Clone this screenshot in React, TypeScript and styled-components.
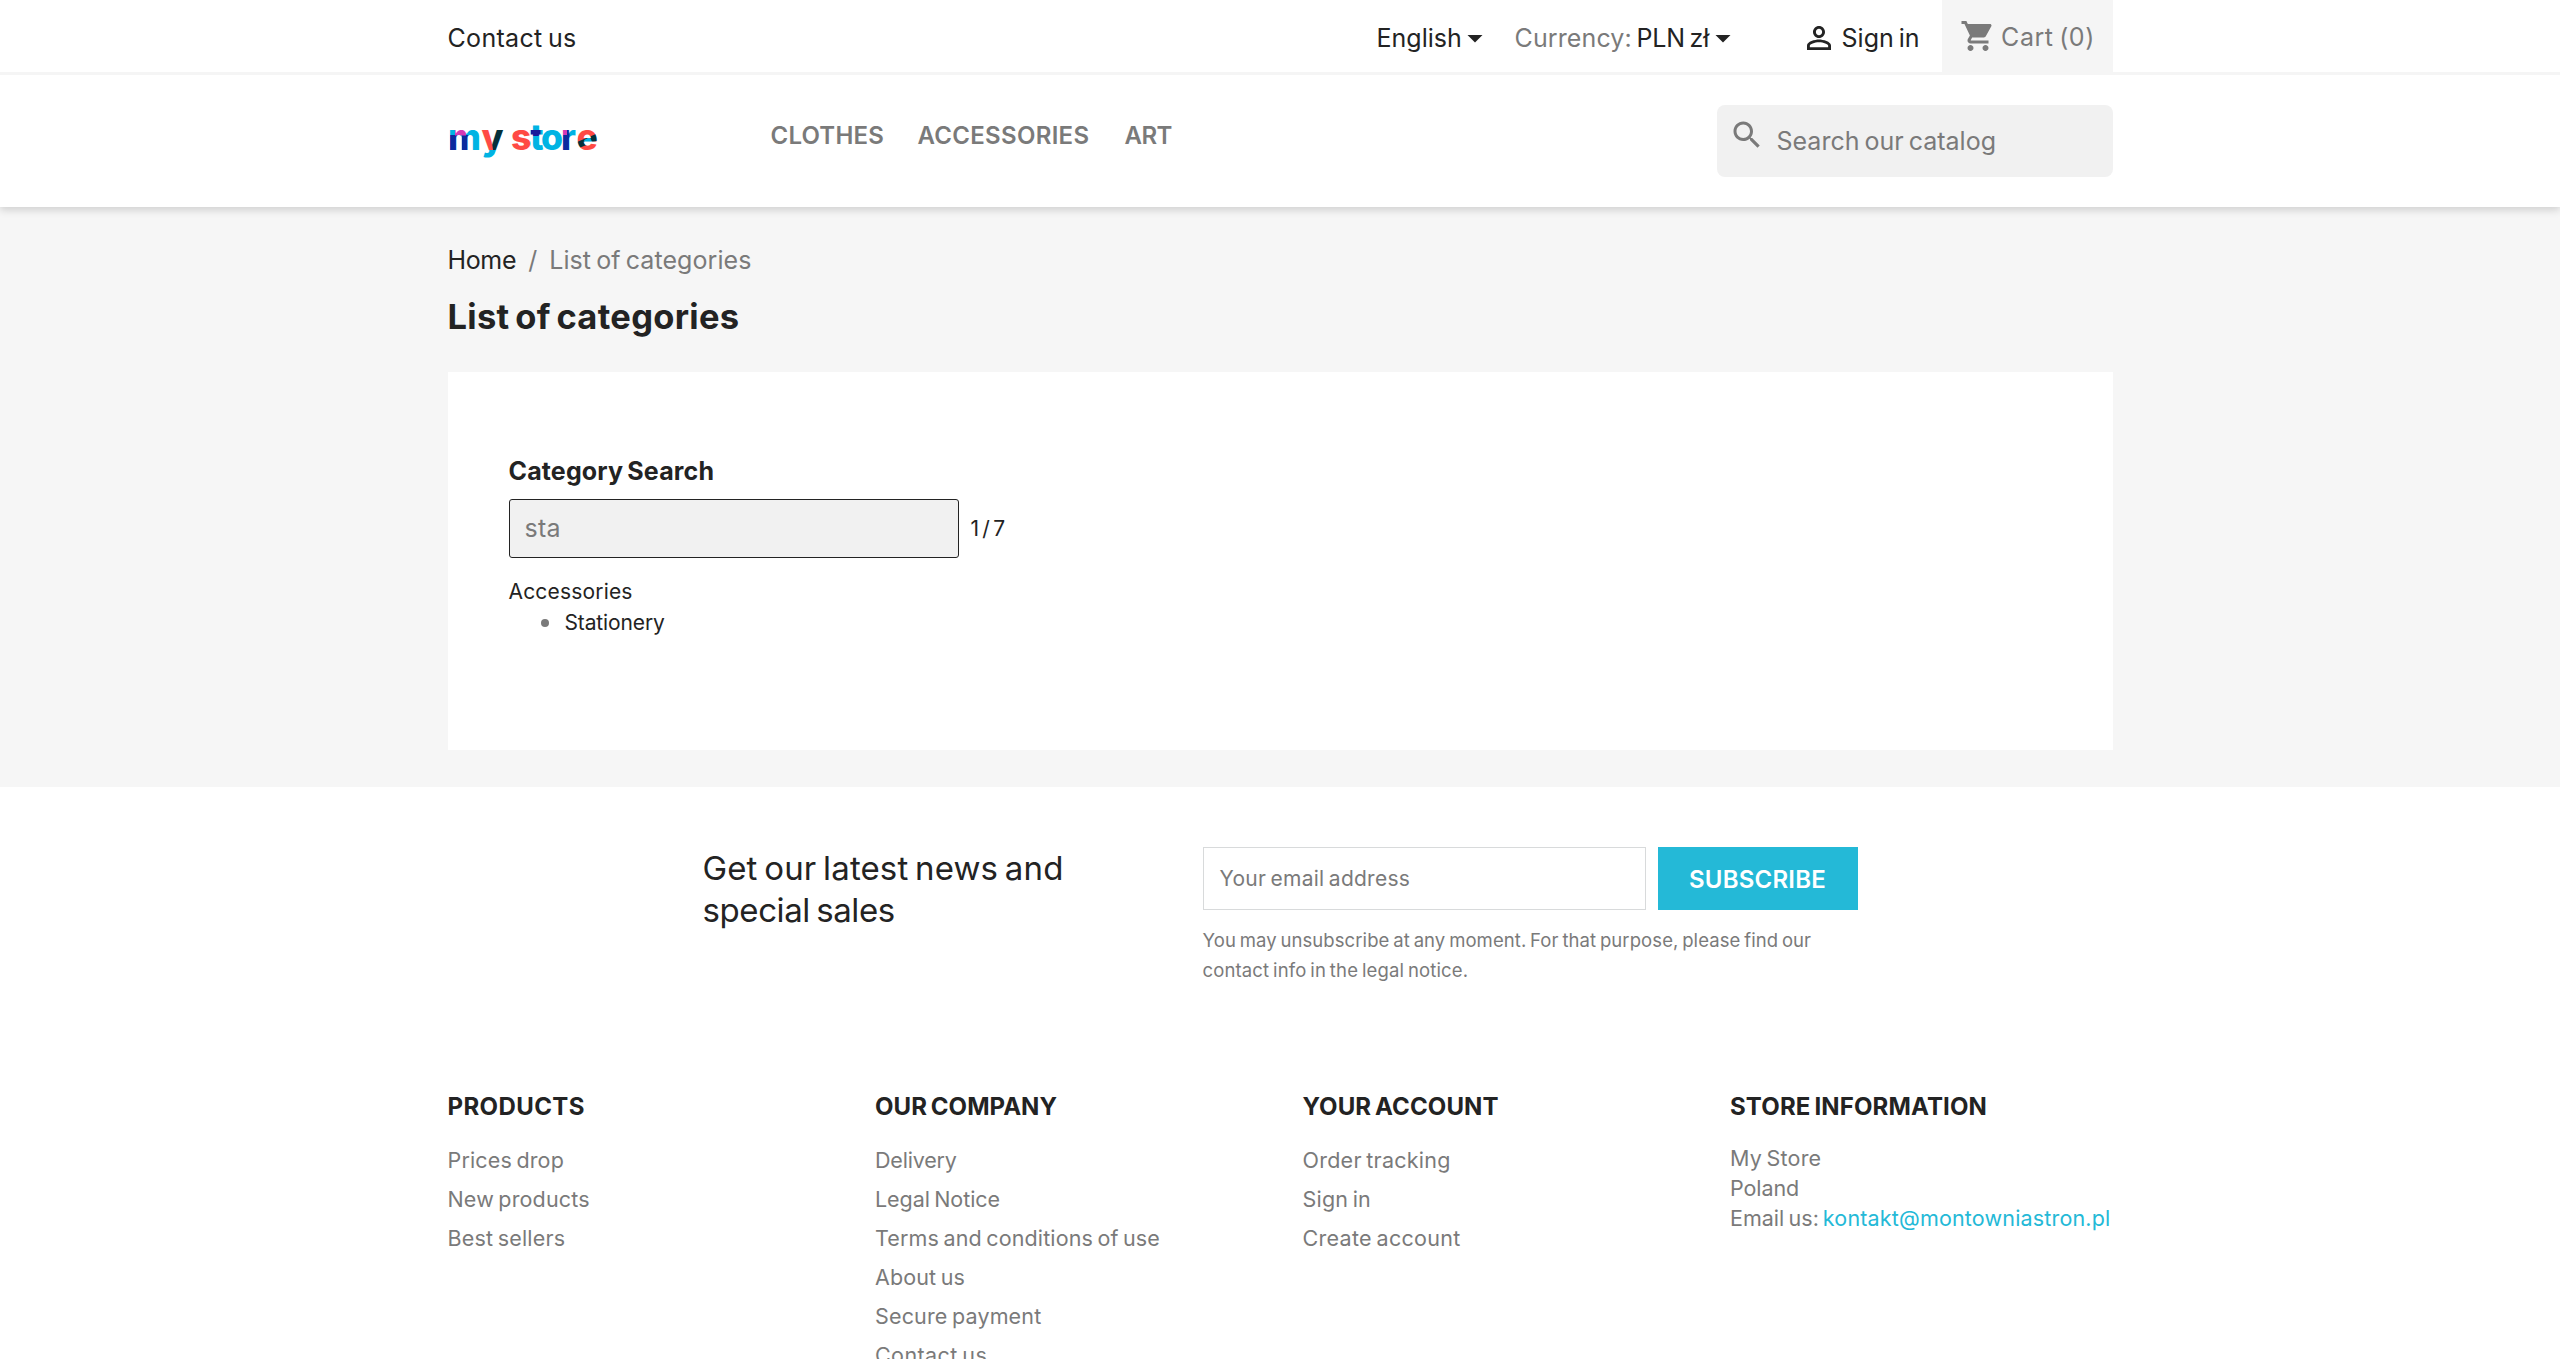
import React from 'react';
import styled, { createGlobalStyle } from 'styled-components';

const dark = '#232323';
const gray = '#7a7a7a';
const cyan = '#24b9d7';

const GlobalStyle = createGlobalStyle`
  * { box-sizing: border-box; }
  html, body { height: 100%; margin: 0; overflow: hidden; background: #fff; }
  body { font-family: Inter, 'Liberation Sans', sans-serif; font-size: 21px; color: ${dark}; }
  ul { list-style: none; margin: 0; padding: 0; }
  h1, h2, h3, p { margin: 0; }
  a { text-decoration: none; color: inherit; }
`;

type TextProps = { $size?: number; $weight?: number; $ls?: number; $color?: string; $lh?: number };

const Text = styled.span<TextProps>`
  font-size: ${p => p.$size ?? 21}px;
  font-weight: ${p => p.$weight ?? 400};
  letter-spacing: ${p => p.$ls ?? 0}px;
  word-spacing: -0.08em;
  color: ${p => p.$color ?? dark};
  line-height: ${p => p.$lh ?? 30}px;
  white-space: nowrap;
`;

const Container = styled.div`
  width: 1665px;
  margin: 0 auto;
`;

const Page = styled.div`
  height: 1359px;
  overflow: hidden;
`;

const Header = styled.header`
  position: relative;
  background: #fff;
  box-shadow: 0 3px 8px rgba(0, 0, 0, 0.16);
`;

const TopBar = styled.nav`
  height: 75px;
  border-bottom: 3px solid #f5f5f5;
`;

const TopBarRow = styled(Container)`
  display: flex;
  justify-content: space-between;
`;

const ContactLink = styled.a`
  display: flex;
  padding-top: 23px;
`;

const TopRight = styled.div`
  display: flex;
  height: 75px;
`;

const TopItem = styled.div<{ $width: number }>`
  width: ${p => p.$width}px;
  display: flex;
  align-items: flex-start;
  padding-top: 23px;
`;

const IconSvg = styled.svg<{ $color?: string; $margin?: string }>`
  width: 36px;
  height: 36px;
  flex: none;
  fill: ${p => p.$color ?? dark};
  margin: ${p => p.$margin ?? '0'};
`;

const Cart = styled.div`
  width: 171px;
  height: 75px;
  background: #f5f5f5;
  display: flex;
  padding: 18px 0 0 18px;
`;

const HeaderMain = styled(Container)`
  height: 132px;
  display: flex;
`;

const LogoLink = styled.a`
  width: 323px;
  padding-top: 38px;
`;

const Menu = styled.ul`
  display: flex;
  flex: 1;
  padding-top: 46px;
`;

const MenuItem = styled.li<{ $width?: number }>`
  width: ${p => (p.$width ? `${p.$width}px` : 'auto')};
`;

const SearchBox = styled.div`
  width: 396px;
  height: 72px;
  margin-top: 30px;
  border-radius: 8px;
  background: #f1f1f1;
  display: flex;
  padding: 11px 0 0 12px;
`;

const SearchPlaceholder = styled.div`
  display: flex;
  padding: 10px 0 0 12px;
`;

const Main = styled.main`
  height: 580px;
  background: #f6f6f6;
  padding-top: 38px;
`;

const Breadcrumb = styled.nav`
  display: flex;
  height: 30px;
  gap: 12px;
`;

const Title = styled.h1`
  display: flex;
  padding-top: 19px;
  height: 97px;
`;

const Panel = styled.section`
  height: 378px;
  background: #fff;
  padding: 84px 61px 0;
`;

const SectionTitle = styled.h2`
  display: flex;
  height: 30px;
`;

const SearchRow = styled.div`
  display: flex;
  align-items: center;
  gap: 12px;
  margin: 13px 0 19px;
`;

const CategoryInput = styled.div`
  width: 450px;
  height: 59px;
  border: 1.5px solid ${dark};
  border-radius: 3px;
  background: #f1f1f1;
  padding: 13px 15px 0;
  display: flex;
`;

const Tree = styled.div`
  display: flex;
  flex-direction: column;
`;

const TreeChild = styled.div`
  display: flex;
  align-items: center;
  padding-left: 32px;
  height: 31px;
`;

const Bullet = styled.span`
  width: 8px;
  height: 8px;
  margin-right: 16px;
  border-radius: 50%;
  background: ${gray};
`;

const Newsletter = styled(Container)`
  height: 290px;
  padding: 60px 0 0 255px;
  display: flex;
`;

const NewsTitle = styled.p`
  width: 500px;
  display: flex;
  flex-direction: column;
`;

const NewsForm = styled.div`
  display: flex;
  flex-direction: column;
`;

const FormRow = styled.div`
  display: flex;
  gap: 12px;
  margin-bottom: 15px;
`;

const EmailInput = styled.div`
  width: 443px;
  height: 63px;
  border: 1.5px solid #d8dadb;
  padding: 16px 16px 0;
  display: flex;
`;

const SubscribeButton = styled.button`
  width: 200px;
  height: 63px;
  border: 0;
  padding: 2px 0 0;
  background: ${cyan};
  font-family: inherit;
`;

const FooterGrid = styled(Container)`
  display: grid;
  grid-template-columns: 427.5px 427.5px 427.5px 1fr;
`;

const FooterTitle = styled.h3`
  height: 53px;
  padding-top: 15px;
  display: flex;
`;

const LinkList = styled.ul`
  padding-top: 15px;
`;

const LinkItem = styled.li`
  height: 39px;
  display: flex;
`;

const StoreInfo = styled.div`
  padding-top: 13px;
  display: flex;
  flex-direction: column;
`;

const InfoLine = styled.div`
  display: flex;
  gap: 4px;
`;

const CaretIcon = ({ margin }: { margin: string }) => (
  <IconSvg viewBox="0 0 24 24" $margin={margin}><path d="M7 10l5 5 5-5z" /></IconSvg>
);

const PersonIcon = () => (
  <IconSvg viewBox="0 0 24 24" $margin="-3px 0 0 -5px">
    <path d="M12 5.9c1.16 0 2.1.94 2.1 2.1s-.94 2.1-2.1 2.1S9.9 9.16 9.9 8s.94-2.1 2.1-2.1m0 9c2.97 0 6.1 1.46 6.1 2.1v1.1H5.9V17c0-.64 3.13-2.1 6.1-2.1M12 4C9.79 4 8 5.79 8 8s1.79 4 4 4 4-1.79 4-4-1.79-4-4-4zm0 9c-2.67 0-8 1.34-8 4v3h16v-3c0-2.66-5.33-4-8-4z" />
  </IconSvg>
);

const CartIcon = () => (
  <IconSvg viewBox="0 0 24 24" $color={gray}>
    <path d="M7 18c-1.1 0-1.99.9-1.99 2S5.9 22 7 22s2-.9 2-2-.9-2-2-2zM1 2v2h2l3.6 7.59-1.35 2.45c-.16.28-.25.61-.25.96 0 1.1.9 2 2 2h12v-2H7.42c-.14 0-.25-.11-.25-.25l.03-.12.9-1.63h7.45c.75 0 1.41-.41 1.75-1.03l3.58-6.49c.08-.14.12-.31.12-.48 0-.55-.45-1-1-1H5.21l-.94-2H1zm16 16c-1.1 0-1.99.9-1.99 2s.89 2 1.99 2 2-.9 2-2-.9-2-2-2z" />
  </IconSvg>
);

const SearchIcon = () => (
  <IconSvg viewBox="0 0 24 24" $color={gray} $margin="1px 0 0">
    <path d="M15.5 14h-.79l-.28-.27C15.41 12.59 16 11.11 16 9.5 16 5.91 13.09 3 9.5 3S3 5.91 3 9.5 5.91 16 9.5 16c1.61 0 3.09-.59 4.23-1.57l.27.28v.79l5 4.99L20.49 19l-4.99-5zm-6 0C7.01 14 5 11.99 5 9.5S7.01 5 9.5 5 14 7.01 14 9.5 11.99 14 9.5 14z" />
  </IconSvg>
);

/* The wordmark is one text filled with a pattern of colour patches. */
const Logo = () => (
  <svg width="152" height="54" viewBox="0 0 152 54">
    <defs>
      <pattern id="ink" patternUnits="userSpaceOnUse" x="0" y="0" width="152" height="54">
        <rect width="152" height="54" fill="#00b3e3" />
        <rect x="2" y="22" width="7" height="18" fill="#0b2b9e" />
        <rect x="14" y="22" width="6.5" height="18" fill="#0b2b9e" />
        <rect x="7" y="16" width="11" height="6.5" fill="#d53ab4" />
        <path d="M33 16h12v11l3 10h-15z" fill="#ff4a44" />
        <path d="M46 16h10l-6 21h-5l-1-8z" fill="#06303a" />
        <rect x="63" y="16" width="19" height="24" fill="#ff4a44" />
        <rect x="83" y="17" width="9.5" height="6" fill="#1a1a9a" />
        <rect x="114" y="16" width="7.5" height="24" fill="#0b2b9e" />
        <rect x="114" y="16" width="5" height="6" fill="#d53ab4" />
        <rect x="129.5" y="16" width="22" height="24" fill="#ff4a44" />
        <path d="M129 29l19-8 3 6-20 8z" fill="#06303a" />
        <path d="M136 27l6-3 2 5-6 3z" fill="#00b3e3" />
      </pattern>
    </defs>
    <text y="37.3" fill="url(#ink)" fontFamily="Inter, sans-serif" fontWeight="800" fontSize="35.5">
      <tspan x="0 33.5">my</tspan>
      <tspan x="63 82 93 113 128.5">store</tspan>
    </text>
  </svg>
);

type LinkDef = [string, number];

const columns: { title: LinkDef; links: LinkDef[] }[] = [
  { title: ['PRODUCTS', 0.39], links: [['Prices drop', 0.15], ['New products', 0.15], ['Best sellers', 0.18]] },
  {
    title: ['OUR COMPANY', 0.05],
    links: [['Delivery', -0.2], ['Legal Notice', -0.05], ['Terms and conditions of use', 0.13], ['About us', 0.12], ['Secure payment', 0.15], ['Contact us', 0.4]],
  },
  { title: ['YOUR ACCOUNT', 0.1], links: [['Order tracking', 0.25], ['Sign in', 0.2], ['Create account', 0.3]] },
];

export default function App() {
  return (
    <Page>
      <GlobalStyle />
      <Header>
        <TopBar>
          <TopBarRow>
            <ContactLink href="#"><Text $size={25} $ls={0.32}>Contact us</Text></ContactLink>
            <TopRight>
              <TopItem $width={138}>
                <Text $size={25} $ls={0}>English</Text>
                <CaretIcon margin="-3px 0 0 -5px" />
              </TopItem>
              <TopItem $width={291}>
                <Text $size={25} $ls={0.12} $color={gray}>Currency:</Text>
                <Text $size={25} $ls={-0.25}>&nbsp;PLN zł</Text>
                <CaretIcon margin="-3px 0 0 -4px" />
              </TopItem>
              <TopItem $width={136}>
                <PersonIcon />
                <Text $size={25} $ls={0}>&nbsp;Sign in</Text>
              </TopItem>
              <Cart>
                <CartIcon />
                <Text $size={25} $ls={0.55} $color={gray} $lh={38}>&nbsp;Cart (0)</Text>
              </Cart>
            </TopRight>
          </TopBarRow>
        </TopBar>
        <HeaderMain>
          <LogoLink href="#"><Logo /></LogoLink>
          <Menu>
            <MenuItem $width={147}><Text $size={24} $weight={600} $ls={0.2} $color={gray}>CLOTHES</Text></MenuItem>
            <MenuItem $width={207}><Text $size={24} $weight={600} $ls={0.3} $color={gray}>ACCESSORIES</Text></MenuItem>
            <MenuItem><Text $size={24} $weight={600} $ls={-0.5} $color={gray}>ART</Text></MenuItem>
          </Menu>
          <SearchBox>
            <SearchIcon />
            <SearchPlaceholder><Text $size={25} $ls={0} $color={gray}>Search our catalog</Text></SearchPlaceholder>
          </SearchBox>
        </HeaderMain>
      </Header>

      <Main>
        <Container>
          <Breadcrumb>
            <Text $size={25} $ls={-0.35}>Home</Text>
            <Text $size={25} $color={gray}>/</Text>
            <Text $size={25} $ls={0.08} $color={gray}>List of categories</Text>
          </Breadcrumb>
          <Title><Text $size={34.5} $weight={700} $ls={0.3} $lh={46}>List of categories</Text></Title>
          <Panel>
            <SectionTitle><Text $size={25} $weight={700} $ls={0.15}>Category Search</Text></SectionTitle>
            <SearchRow>
              <CategoryInput><Text $size={25} $ls={0.3} $color={gray}>sta</Text></CategoryInput>
              <Text $ls={-0.47}>1 / 7</Text>
            </SearchRow>
            <Tree>
              <Text $ls={0.18}>Accessories</Text>
              <TreeChild><Bullet /><Text $ls={-0.13}>Stationery</Text></TreeChild>
            </Tree>
          </Panel>
        </Container>
      </Main>

      <footer>
        <Newsletter>
          <NewsTitle>
            <Text $size={33} $ls={0.12} $lh={42}>Get our latest news and</Text>
            <Text $size={33} $ls={-0.4} $lh={42}>special sales</Text>
          </NewsTitle>
          <NewsForm>
            <FormRow>
              <EmailInput><Text $ls={0.25} $color={gray}>Your email address</Text></EmailInput>
              <SubscribeButton><Text $size={24} $weight={600} $ls={0.24} $color="#fff">SUBSCRIBE</Text></SubscribeButton>
            </FormRow>
            <Text $size={18.5} $ls={0.08} $color={gray}>You may unsubscribe at any moment. For that purpose, please find our</Text>
            <Text $size={18.5} $ls={0.14} $color={gray}>contact info in the legal notice.</Text>
          </NewsForm>
        </Newsletter>
        <FooterGrid>
          {columns.map(({ title, links }) => (
            <div key={title[0]}>
              <FooterTitle><Text $size={24} $weight={700} $ls={title[1]}>{title[0]}</Text></FooterTitle>
              <LinkList>
                {links.map(([label, ls]) => (
                  <LinkItem key={label}><Text as="a" $size={21.5} $ls={ls} $color={gray}>{label}</Text></LinkItem>
                ))}
              </LinkList>
            </div>
          ))}
          <div>
            <FooterTitle><Text $size={24} $weight={700} $ls={0.14}>STORE INFORMATION</Text></FooterTitle>
            <StoreInfo>
              <Text $size={21.5} $ls={0.2} $color={gray}>My Store</Text>
              <Text $size={21.5} $ls={-0.1} $color={gray}>Poland</Text>
              <InfoLine>
                <Text $size={21.5} $color={gray}>Email us:</Text>
                <Text as="a" $size={21.5} $ls={0.17} $color={cyan}>kontakt@montowniastron.pl</Text>
              </InfoLine>
            </StoreInfo>
          </div>
        </FooterGrid>
      </footer>
    </Page>
  );
}
